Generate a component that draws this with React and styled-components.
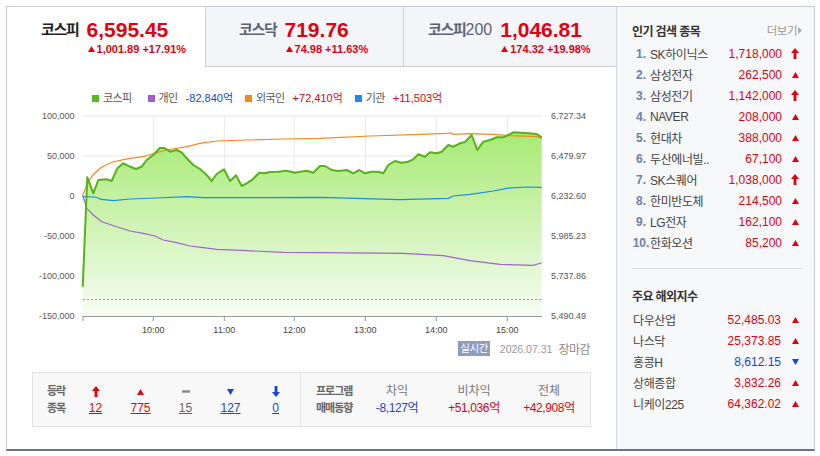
import React from "react"
import styled, { createGlobalStyle } from "styled-components"

const KR = `"Liberation Sans", "Noto Sans CJK KR", sans-serif`
const RED = "#e3000f"
const BLUE = "#1546d6"

const GlobalStyle = createGlobalStyle`
  html, body {
    margin: 0;
    padding: 0;
    background: #fff;
    font-family: ${KR};
    color: #333;
  }
  * { box-sizing: border-box; }
`

const Frame = styled.div`
  margin: 6px 0 0 6px;
  width: 809px;
  height: 445px;
  border: 1px solid #c6c9d1;
  border-bottom: 2px solid #6d7382;
  display: flex;
`

const Main = styled.div`
  width: 609px;
  display: flex;
  flex-direction: column;
`

const Tabs = styled.div`
  display: flex;
  height: 60px;
`

const Tab = styled.div`
  flex: 0 0 ${p => p.$w}px;
  height: 60px;
  display: flex;
  align-items: flex-start;
  padding: 11px 0 0 ${p => p.$pad}px;
  background: ${p => (p.$active ? "#fff" : "#f4f5f9")};
  border-bottom: ${p => (p.$active ? "none" : "1px solid #cdd0d8")};
  border-left: ${p => (p.$first ? "none" : "1px solid #cdd0d8")};
`

const TabLabel = styled.span`
  font-size: 15px;
  line-height: 24px;
  font-weight: bold;
  letter-spacing: -1.3px;
  color: ${p => (p.$active ? "#222" : "#5d6376")};
  margin-right: 8px;
  white-space: nowrap;
`

const LabelSuffix = styled.span`
  font-size: 16px;
  font-weight: normal;
  letter-spacing: 0;
`

const TabValues = styled.div`
  display: flex;
  flex-direction: column;
`

const TabValue = styled.span`
  font-size: 21px;
  line-height: 24px;
  font-weight: bold;
  color: ${RED};
`

const TabSub = styled.span`
  display: flex;
  align-items: center;
  gap: 2px;
  font-size: 11px;
  line-height: 14px;
  font-weight: bold;
  color: ${RED};
  white-space: nowrap;
  padding-left: 1px;
`

const Legend = styled.div`
  display: flex;
  align-items: center;
  gap: 12px;
  margin-top: 24px;
  height: 14px;
  padding-left: 85px;
  font-size: 11px;
  line-height: 14px;
  color: #555;
`

const LegendItem = styled.span`
  display: flex;
  align-items: center;
  gap: 4px;
  white-space: nowrap;
`

const Swatch = styled.i`
  display: inline-block;
  width: 7px;
  height: 7px;
  background: ${p => p.$c};
`

const LegendName = styled.span`
  letter-spacing: -0.6px;
  margin-right: 4px;
`

const Num = styled.span`
  color: ${p => p.$c || "#333"};
`

const ChartSvg = styled.svg`
  display: block;
`

const StatusRow = styled.div`
  display: flex;
  justify-content: flex-end;
  align-items: center;
  height: 17px;
  padding-right: 26px;
`

const Badge = styled.span`
  background: #8e9cc1;
  color: #fff;
  font-size: 10.5px;
  line-height: 15px;
  height: 15px;
  padding: 0 2px;
  letter-spacing: -0.5px;
`

const DateText = styled.span`
  margin-left: 10px;
  color: #999;
  font-size: 10.5px;
`

const Closed = styled.span`
  margin-left: 6px;
  color: #888;
  font-size: 12px;
  letter-spacing: -0.5px;
`

const StatBox = styled.div`
  margin: 15px 0 0 25px;
  width: 559px;
  height: 55px;
  border: 1px solid #e1e1e1;
  background: #f8f8f8;
  display: flex;
`

const StatSection = styled.div`
  display: grid;
  grid-template-columns: ${p => p.$cols};
  grid-template-rows: 17px 17px;
  align-content: start;
  padding: 10px 0 0 ${p => p.$pad}px;
  width: ${p => (p.$w ? `${p.$w}px` : "auto")};
  flex: ${p => (p.$w ? "none" : "1")};
  border-right: ${p => (p.$divider ? "1px solid #e4e4e4" : "none")};
`

const StatLabel = styled.span`
  font-size: 11px;
  font-weight: bold;
  color: #666;
  letter-spacing: -1px;
  line-height: 17px;
  white-space: nowrap;
`

const StatCell = styled.span`
  display: flex;
  align-items: center;
  justify-content: center;
  line-height: 17px;
  font-size: 12px;
  color: ${p => p.$c || "#777"};
  white-space: nowrap;
  letter-spacing: ${p => (p.$tight ? "-0.4px" : "0")};
`

const StatLink = styled.span`
  font-size: 12px;
  color: ${p => p.$c};
  text-decoration: underline;
  line-height: 17px;
  text-align: center;
`

const Side = styled.aside`
  flex: 1;
  background: #f7f8fa;
  border-left: 1px solid #d5d7dd;
  padding: 15px 12px 0 15px;
  display: flex;
  flex-direction: column;
`

const SideHead = styled.div`
  display: flex;
  justify-content: space-between;
  align-items: center;
  height: 16px;
  margin-top: ${p => p.$top || 0}px;
`

const SideTitle = styled.h3`
  margin: 0;
  font-size: 12px;
  font-weight: bold;
  color: #333;
  letter-spacing: -0.6px;
`

const More = styled.span`
  display: flex;
  align-items: center;
  gap: 1px;
  font-size: 11.5px;
  color: #999;
  letter-spacing: -0.5px;
`

const List = styled.ul`
  list-style: none;
  margin: ${p => p.$top}px 0 0;
  padding: 0;
`

const Row = styled.li`
  display: flex;
  align-items: center;
  height: 21px;
  font-size: 12px;
`

const Rank = styled.span`
  width: 18px;
  text-align: center;
  font-weight: bold;
  color: #6b80ad;
  font-size: 12px;
`

const Name = styled.span`
  flex: 1;
  color: #444;
  letter-spacing: -0.4px;
  padding-left: ${p => p.$pad || 0}px;
  white-space: nowrap;
`

const Price = styled.span`
  color: ${p => p.$c};
`

const IconBox = styled.span`
  width: 14px;
  margin-left: ${p => p.$gap || 6}px;
  display: flex;
  justify-content: center;
  align-items: center;
`

const Divider = styled.hr`
  margin: 15px 0 0;
  border: none;
  border-top: 1px solid #dcdde2;
`

const Arrow = ({ c, down }) => (
  <svg width="8" height="11" viewBox="0 0 8 11">
    <path
      d="M4 0 L8 5 H5.4 V11 H2.6 V5 H0 Z"
      fill={c}
      transform={down ? "rotate(180 4 5.5)" : undefined}
    />
  </svg>
)

const Tri = ({ c, down }) => (
  <svg width="7" height="6" viewBox="0 0 7 6">
    <path d={down ? "M0 0 H7 L3.5 6 Z" : "M3.5 0 L7 6 H0 Z"} fill={c} />
  </svg>
)

const Flat = () => (
  <svg width="8" height="3" viewBox="0 0 8 3">
    <rect width="8" height="2.4" y="0.3" fill="#888" />
  </svg>
)

const Caret = () => (
  <svg width="4" height="7" viewBox="0 0 4 7">
    <path d="M0 0 L4 3.5 L0 7 Z" fill="#aaa" />
  </svg>
)

const tabs = [
  { label: "코스피", value: "6,595.45", sub: "1,001.89 +17.91%", w: 198, pad: 34, active: true },
  { label: "코스닥", value: "719.76", sub: "74.98 +11.63%", w: 198, pad: 33 },
  { label: "코스피", suffix: "200", value: "1,046.81", sub: "174.32 +19.98%", w: 213, pad: 24 }
]

const kospi = [[82.7,286.7],[87.3,177.3],[93.3,193.3],[98.3,180],[106.7,179.3],[111.7,181],[117.3,168.3],[123.3,163.3],[130,166.7],[136,169],[141.7,166.7],[146.7,160],[153.3,155],[160,147.7],[165,148.3],[170,151.7],[176.7,150],[181.7,152.3],[186.7,158.3],[193.3,165],[200,169],[206.7,175],[211.7,181],[216.7,174],[224,169.3],[230,181],[236,175.3],[241.7,186],[246.7,183.3],[252.7,179.3],[259.3,172.7],[265,173.3],[270,172],[278.3,171.7],[286.7,170.7],[295,172.7],[300,171.7],[306.7,170.7],[313.3,172.7],[320,166],[325,166],[331.7,170],[338.3,171],[346.7,170],[353.3,173.3],[359.3,170],[365,173.3],[371.7,171.7],[378.3,171.7],[383.3,173.3],[388.3,165],[395,161],[401.7,162.7],[408.3,161.7],[413.3,159.3],[418.3,154.3],[425,156.7],[430,152.3],[436.7,153.3],[441.7,151.7],[448.3,145],[453.3,146.7],[460,143.3],[465,142],[471.7,135],[477.3,150],[483.3,141.7],[490,140],[496.7,137.3],[503.3,137.3],[508.3,135],[513.3,132.3],[520,132.7],[528.3,133.3],[536.7,134],[541.7,137.3]]

const foreign = [[82.7,195],[88.3,181.7],[93,175],[100,168.3],[106,165],[113.3,161.7],[130,158.3],[143.3,156.7],[156.7,152.7],[166.7,150],[186.7,146.7],[200,143.3],[216.7,141],[246.7,140],[283.3,139],[320,138.3],[370,136],[420,134.3],[446.7,133.3],[450,132.8],[453.3,134.3],[470,133.7],[493.3,134.3],[510,135.7],[536.7,136.7],[541.7,138.3]]

const inst = [[82.7,196.7],[95,197],[101.7,199.3],[113.3,200.7],[130,199],[156.7,198],[186.7,196.7],[203.3,197.7],[243.3,197.7],[320,197.3],[400,199.7],[448.3,198.3],[453.3,196],[470,194.3],[493.3,191],[506.7,188.3],[526.7,187],[541.7,187.3]]

const retail = [[82.7,195],[86.7,208.3],[93.3,215],[101.7,221.7],[116.7,226.7],[130,231],[143.3,233.3],[155,236],[163.3,240],[176.7,242.7],[190,246],[203.3,247.7],[216.7,249.3],[246.7,250.7],[283.3,252.3],[320,252.7],[403.3,253.3],[443.3,255.7],[470,260.7],[500,264.3],[533.3,265.3],[541.7,262.7]]

const pts = arr => arr.map(p => p.join(",")).join(" ")

const leftAxis = ["100,000", "50,000", "0", "-50,000", "-100,000", "-150,000"]
const rightAxis = ["6,727.34", "6,479.97", "6,232.60", "5,985.23", "5,737.86", "5,490.49"]
const hours = [
  [153.3, "10:00"],
  [224.3, "11:00"],
  [294.3, "12:00"],
  [365.3, "13:00"],
  [436.3, "14:00"],
  [507.3, "15:00"]
]

const Chart = () => (
  <ChartSvg width="609" height="235" viewBox="7 105 609 235">
    <defs>
      <linearGradient id="kfill" x1="0" y1="130" x2="0" y2="316" gradientUnits="userSpaceOnUse">
        <stop offset="0" stopColor="#a6ea73" />
        <stop offset="0.5" stopColor="#cff3b3" />
        <stop offset="1" stopColor="#f6fdf2" />
      </linearGradient>
    </defs>
    {leftAxis.map((t, i) => (
      <g key={t}>
        <line x1="83" x2="542" y1={116 + i * 40} y2={116 + i * 40} stroke="#e8e8e8" />
        <text x="74.5" y={119 + i * 40} fontSize="9" fill="#555" textAnchor="end">
          {t}
        </text>
        <text x="551" y={119 + i * 40} fontSize="9" fill="#555">
          {rightAxis[i]}
        </text>
      </g>
    ))}
    {hours.map(([x, t]) => (
      <g key={t}>
        <line x1={x} x2={x} y1="116" y2="316" stroke="#e8e8e8" />
        <line x1={x} x2={x} y1="316" y2="321" stroke="#999" />
        <text x={x} y="333" fontSize="9" fill="#444" textAnchor="middle">
          {t}
        </text>
      </g>
    ))}
    <path d={`M${pts(kospi)} L541.7,316 L82.7,316 Z`} fill="url(#kfill)" />
    <line x1="83" x2="542" y1="299.5" y2="299.5" stroke="#999" strokeDasharray="2,2" />
    <polyline points={pts(foreign)} fill="none" stroke="#f5891f" strokeWidth="1.2" />
    <polyline points={pts(retail)} fill="none" stroke="#a364c8" strokeWidth="1.2" />
    <polyline points={pts(inst)} fill="none" stroke="#1d8de0" strokeWidth="1.2" />
    <polyline points={pts(kospi)} fill="none" stroke="#55b318" strokeWidth="2" strokeLinejoin="round" />
    <line x1="83" x2="542" y1="316.5" y2="316.5" stroke="#999" />
    <line x1="83" x2="83" y1="316" y2="321" stroke="#999" />
  </ChartSvg>
)

const popular = [
  ["SK하이닉스", "1,718,000", "up"],
  ["삼성전자", "262,500", "tri"],
  ["삼성전기", "1,142,000", "up"],
  ["NAVER", "208,000", "tri"],
  ["현대차", "388,000", "tri"],
  ["두산에너빌..", "67,100", "tri"],
  ["SK스퀘어", "1,038,000", "up"],
  ["한미반도체", "214,500", "tri"],
  ["LG전자", "162,100", "tri"],
  ["한화오션", "85,200", "tri"]
]

const overseas = [
  ["다우산업", "52,485.03", false],
  ["나스닥", "25,373.85", false],
  ["홍콩H", "8,612.15", true],
  ["상해종합", "3,832.26", false],
  ["니케이225", "64,362.02", false]
]

const App = () => (
  <>
    <GlobalStyle />
    <Frame>
      <Main>
        <Tabs>
          {tabs.map((t, i) => (
            <Tab key={i} $w={t.w} $pad={t.pad} $active={t.active} $first={i === 0}>
              <TabLabel $active={t.active}>
                {t.label}
                {t.suffix && <LabelSuffix>{t.suffix}</LabelSuffix>}
              </TabLabel>
              <TabValues>
                <TabValue>{t.value}</TabValue>
                <TabSub>
                  <Tri c={RED} />
                  {t.sub}
                </TabSub>
              </TabValues>
            </Tab>
          ))}
        </Tabs>
        <Legend>
          <LegendItem>
            <Swatch $c="#58b71a" />
            <LegendName>코스피</LegendName>
          </LegendItem>
          <LegendItem>
            <Swatch $c="#9d5fcb" />
            <LegendName>개인</LegendName>
            <Num $c={BLUE}>-82,840억</Num>
          </LegendItem>
          <LegendItem>
            <Swatch $c="#f08a1c" />
            <LegendName>외국인</LegendName>
            <Num $c={RED}>+72,410억</Num>
          </LegendItem>
          <LegendItem>
            <Swatch $c="#1a8fe3" />
            <LegendName>기관</LegendName>
            <Num $c={RED}>+11,503억</Num>
          </LegendItem>
        </Legend>
        <Chart />
        <StatusRow>
          <Badge>실시간</Badge>
          <DateText>2026.07.31</DateText>
          <Closed>장마감</Closed>
        </StatusRow>
        <StatBox>
          <StatSection $cols="26px repeat(5, 45px)" $pad={14} $w={268} $divider>
            <StatLabel>등락</StatLabel>
            <StatCell><Arrow c={RED} /></StatCell>
            <StatCell><Tri c={RED} /></StatCell>
            <StatCell><Flat /></StatCell>
            <StatCell><Tri c={BLUE} down /></StatCell>
            <StatCell><Arrow c={BLUE} down /></StatCell>
            <StatLabel>종목</StatLabel>
            <StatLink $c={RED}>12</StatLink>
            <StatLink $c={RED}>775</StatLink>
            <StatLink $c="#666">15</StatLink>
            <StatLink $c={BLUE}>127</StatLink>
            <StatLink $c={BLUE}>0</StatLink>
          </StatSection>
          <StatSection $cols="38px 86px 68px 82px" $pad={15}>
            <StatLabel>프로그램</StatLabel>
            <StatCell>차익</StatCell>
            <StatCell>비차익</StatCell>
            <StatCell>전체</StatCell>
            <StatLabel>매매동향</StatLabel>
            <StatCell $c={BLUE} $tight>-8,127억</StatCell>
            <StatCell $c={RED} $tight>+51,036억</StatCell>
            <StatCell $c={RED} $tight>+42,908억</StatCell>
          </StatSection>
        </StatBox>
      </Main>
      <Side>
        <SideHead>
          <SideTitle>인기 검색 종목</SideTitle>
          <More>
            더보기
            <Caret />
          </More>
        </SideHead>
        <List $top={5}>
          {popular.map(([name, price, kind], i) => (
            <Row key={name}>
              <Rank>{i + 1}.</Rank>
              <Name>{name}</Name>
              <Price $c={RED}>{price}</Price>
              <IconBox>{kind === "up" ? <Arrow c={RED} /> : <Tri c={RED} />}</IconBox>
            </Row>
          ))}
        </List>
        <Divider />
        <SideHead $top={18}>
          <SideTitle>주요 해외지수</SideTitle>
        </SideHead>
        <List $top={6}>
          {overseas.map(([name, value, down]) => (
            <Row key={name}>
              <Name $pad={1}>{name}</Name>
              <Price $c={down ? BLUE : RED}>{value}</Price>
              <IconBox $gap={7}>
                <Tri c={down ? BLUE : RED} down={down} />
              </IconBox>
            </Row>
          ))}
        </List>
      </Side>
    </Frame>
  </>
)

export default App
